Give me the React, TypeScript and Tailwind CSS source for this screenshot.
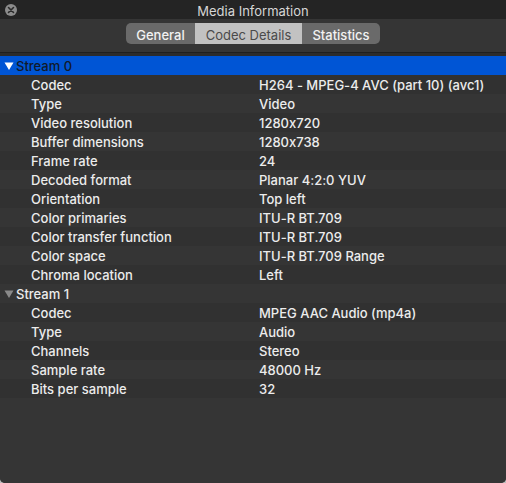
import React from "react";

type Row = { k: string; v: string };

const stream0: Row[] = [
  { k: "Codec", v: "H264 - MPEG-4 AVC (part 10) (avc1)" },
  { k: "Type", v: "Video" },
  { k: "Video resolution", v: "1280x720" },
  { k: "Buffer dimensions", v: "1280x738" },
  { k: "Frame rate", v: "24" },
  { k: "Decoded format", v: "Planar 4:2:0 YUV" },
  { k: "Orientation", v: "Top left" },
  { k: "Color primaries", v: "ITU-R BT.709" },
  { k: "Color transfer function", v: "ITU-R BT.709" },
  { k: "Color space", v: "ITU-R BT.709 Range" },
  { k: "Chroma location", v: "Left" },
];

const stream1: Row[] = [
  { k: "Codec", v: "MPEG AAC Audio (mp4a)" },
  { k: "Type", v: "Audio" },
  { k: "Channels", v: "Stereo" },
  { k: "Sample rate", v: "48000 Hz" },
  { k: "Bits per sample", v: "32" },
];

function Tri({ color }: { color: string }) {
  return (
    <svg width="10" height="10" viewBox="0 0 10 10" className="shrink-0">
      <polygon points="0.5,1.5 9.5,1.5 5,9" fill={color} />
    </svg>
  );
}

function DataRow({ r, odd }: { r: Row; odd: boolean }) {
  return (
    <div className={`flex h-[19px] items-center pt-[1px] ${odd ? "bg-[#313131]" : "bg-[#353535]"}`}>
      <div className="w-[259px] pl-[31px] shrink-0">{r.k}</div>
      <div>{r.v}</div>
    </div>
  );
}

export default function App() {
  let idx = 0;
  const rows: React.ReactNode[] = [];
  rows.push(
    <div key="s0" className="flex h-[19px] items-center gap-[2px] bg-[#0055d5] pl-[4px] pt-[1px] text-[#111a2a]">
      <Tri color="#ffffff" />
      <span>Stream 0</span>
    </div>
  );
  idx++;
  stream0.forEach((r, i) => {
    rows.push(<DataRow key={"a" + i} r={r} odd={idx % 2 === 1} />);
    idx++;
  });
  rows.push(
    <div key="s1" className={`flex h-[19px] items-center gap-[2px] pl-[4px] pt-[1px] ${idx % 2 === 1 ? "bg-[#313131]" : "bg-[#353535]"}`}>
      <Tri color="#8a8a8a" />
      <span>Stream 1</span>
    </div>
  );
  idx++;
  stream1.forEach((r, i) => {
    rows.push(<DataRow key={"b" + i} r={r} odd={idx % 2 === 1} />);
    idx++;
  });

  return (
    <div
      className="w-[506px] h-[483px] bg-[#bdbdbd]"
      style={{ fontFamily: "Inter, 'Noto Sans', sans-serif", fontFeatureSettings: "'calt' 0" }}
    >
      <div className="flex h-full w-full flex-col overflow-hidden rounded-b-[5px] bg-[#353535] text-[13px] leading-[16px] font-medium text-[#ececec]">
        {/* title bar */}
        <div className="relative flex h-[19px] shrink-0 items-center justify-center bg-[#242424] pt-[2px]">
          <div className="absolute left-[5px] top-[4px] flex h-[12px] w-[12px] items-center justify-center rounded-full bg-[#8c8c8c]">
            <svg width="8" height="8" viewBox="0 0 8 8">
              <path d="M1.5 1.5 L6.5 6.5 M6.5 1.5 L1.5 6.5" stroke="#2a2a2a" strokeWidth="1.6" strokeLinecap="round" />
            </svg>
          </div>
          <span className="text-[13px] font-normal text-[#d6d6d6]">Media Information</span>
        </div>
        {/* toolbar */}
        <div className="flex h-[34px] shrink-0 justify-center border-b border-[#1f1f1f] bg-[#353535] pt-[4px]">
          <div className="flex h-[21px] overflow-hidden rounded-[5px] bg-[#6a6a6a] text-[13px]">
            <div className="flex w-[69px] items-center justify-center pt-[2px] text-[#f2f2f2]">General</div>
            <div className="flex w-[107px] items-center justify-center bg-[#c2c2c2] pt-[2px] font-normal text-[#4a4a4a]">Codec Details</div>
            <div className="flex w-[78px] items-center justify-center pt-[2px] text-[#f2f2f2]">Statistics</div>
          </div>
        </div>
        <div className="h-[3px] shrink-0 bg-[#2c2c2c]" />
        {/* list */}
        <div className="flex flex-1 flex-col bg-[#353535]">{rows}</div>
      </div>
    </div>
  );
}
